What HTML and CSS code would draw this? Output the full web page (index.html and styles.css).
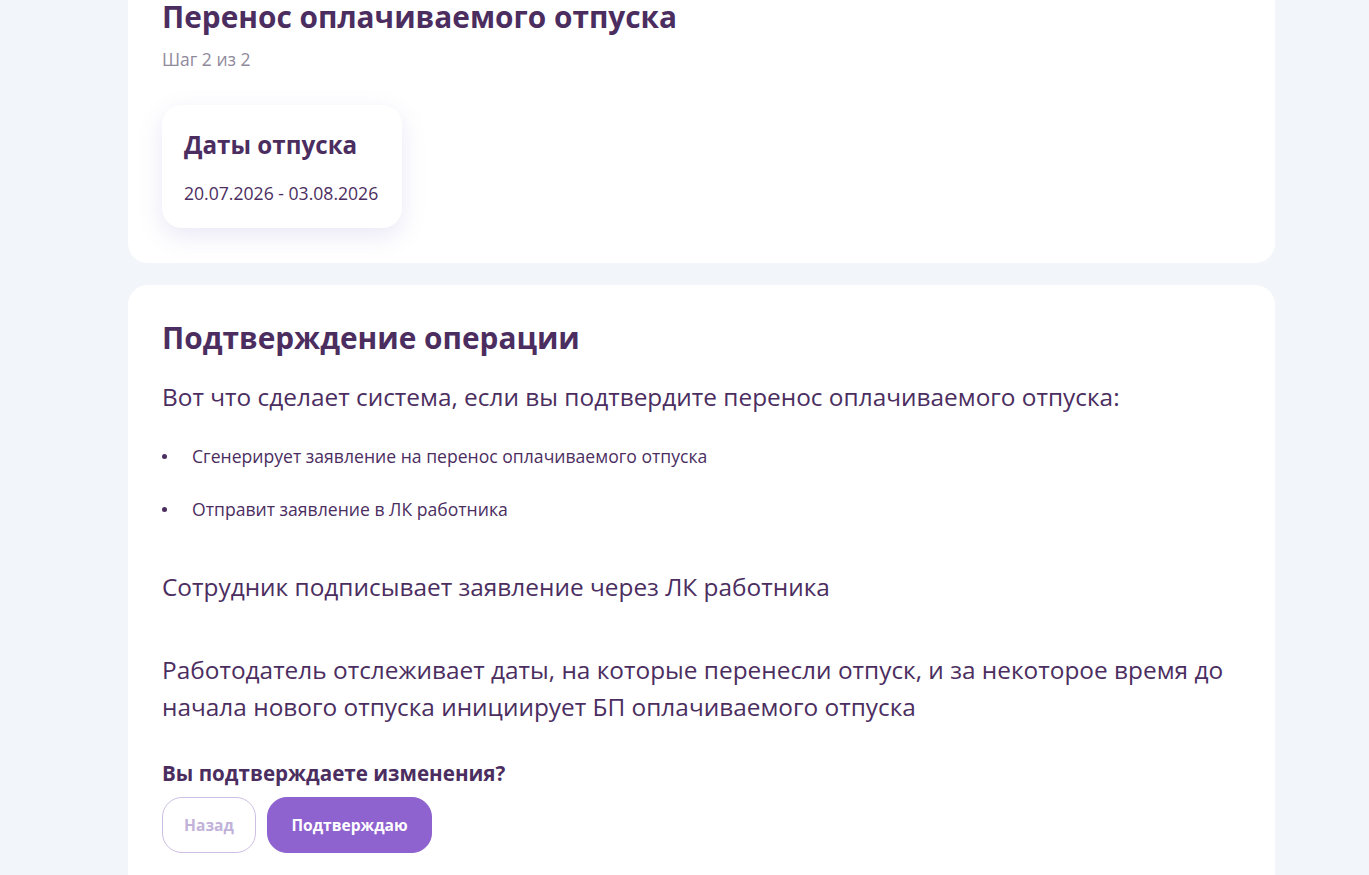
FILE: index.html
```html
<!DOCTYPE html>
<html lang="ru">

<head>
    <meta charset="UTF-8">
    <meta name="viewport" content="width=device-width, initial-scale=1.0">
    <title>Перенос оплачиваемого отпуска</title>
    <link rel="stylesheet" href="styles.css">
</head>

<body>
    <main class="page">
        <section class="panel panel-top">
            <h1 class="panel-title">Перенос оплачиваемого отпуска</h1>
            <p class="step">Шаг 2 из 2</p>

            <div class="info-card">
                <h3 class="info-title">Даты отпуска</h3>
                <p class="info-value">20.07.2026 - 03.08.2026</p>
            </div>
        </section>

        <section class="panel">
            <h2 class="panel-title">Подтверждение операции</h2>
            <p class="lead">Вот что сделает система, если вы подтвердите перенос оплачиваемого отпуска:</p>

            <ul class="actions">
                <li>Сгенерирует заявление на перенос оплачиваемого отпуска</li>
                <li>Отправит заявление в ЛК работника</li>
            </ul>

            <p class="lead note">Сотрудник подписывает заявление через ЛК работника</p>
            <p class="lead note">Работодатель отслеживает даты, на которые перенесли отпуск, и за некоторое время до начала нового отпуска инициирует БП оплачиваемого отпуска</p>

            <p class="question">Вы подтверждаете изменения?</p>
            <div class="buttons">
                <button type="button" class="btn btn-back">Назад</button>
                <button type="button" class="btn btn-confirm">Подтверждаю</button>
            </div>
        </section>
    </main>
</body>

</html>
```

FILE: styles.css
```css
body {
    margin: 0;
    background-color: #f2f5f9;
    font-family: "Open Sans", "Noto Sans", sans-serif;
    color: #4b2e5f;
}

/* page is scrolled a little, top of the first card is out of view */
.page {
    width: 1147px;
    margin: -37px 0 0 128px;
    display: flex;
    flex-direction: column;
    gap: 22px;
}

.panel {
    background-color: #fff;
    border-radius: 20px;
    padding: 33px 34px 40px;
}

.panel-top {
    padding-top: 34px;
    padding-bottom: 35px;
}

.panel-title {
    margin: 0;
    font-size: 29.8px;
    font-weight: 700;
    line-height: 40px;
}

.step {
    margin: 11px 0 0;
    font-size: 17.5px;
    line-height: 22px;
    color: #8f8a9c;
}

.info-card {
    width: 240px;
    box-sizing: border-box;
    margin-top: 35px;
    padding: 23px 22px;
    border-radius: 20px;
    background-color: #fff;
    box-shadow: 0 8px 24px rgba(120, 110, 200, 0.16);
}

.info-title {
    margin: 0;
    font-size: 24.2px;
    font-weight: 700;
    line-height: 34px;
}

.info-value {
    margin: 19px 0 0;
    font-size: 17.6px;
    line-height: 24px;
    white-space: nowrap;
}

.lead {
    margin: 20px 0 0;
    font-size: 24.4px;
    line-height: 37px;
}

.actions {
    margin: 28px 0 0;
    padding: 0;
    list-style: none;
    font-size: 17.6px;
}

.actions li {
    display: flex;
    align-items: center;
    line-height: 26px;
}

.actions li::before {
    content: "";
    width: 5px;
    height: 5px;
    margin-right: 25px;
    border-radius: 50%;
    background-color: #4b2e5f;
    flex-shrink: 0;
}

.actions li + li {
    margin-top: 27px;
}

.note {
    margin-top: 46px;
}

.question {
    margin: 34px 0 0;
    font-size: 20.6px;
    font-weight: 700;
    line-height: 28px;
}

.buttons {
    display: flex;
    gap: 11px;
    margin-top: 10px;
}

.btn {
    height: 56px;
    padding: 0;
    border-radius: 20px;
    font-family: inherit;
    font-size: 15.6px;
    font-weight: 700;
    cursor: pointer;
}

.btn-back {
    width: 94px;
    background-color: #fff;
    border: 1px solid #cdbfe3;
    color: #c2b2d9;
}

.btn-confirm {
    width: 165px;
    background-color: #8e62cf;
    border: 1px solid #8e62cf;
    color: #fff;
}
```
